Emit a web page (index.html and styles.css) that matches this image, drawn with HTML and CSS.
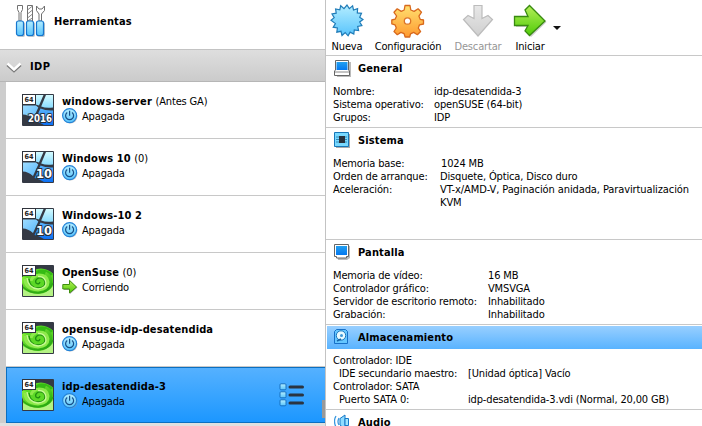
FILE: index.html
```html
<!DOCTYPE html>
<html lang="es">
<head>
<meta charset="utf-8">
<title>VirtualBox</title>
<link rel="stylesheet" href="styles.css">
</head>
<body>
<svg class="defs" width="0" height="0">
  <defs>
    <linearGradient id="blue" x1="0" y1="0" x2="0" y2="1"><stop offset="0" stop-color="#b4edff"/><stop offset="1" stop-color="#58c4fc"/></linearGradient>
    <linearGradient id="screen" x1="0" y1="0" x2="0" y2="1"><stop offset="0" stop-color="#22a0f0"/><stop offset="1" stop-color="#0478f0"/></linearGradient>
    <linearGradient id="orange" x1="0" y1="0" x2="0" y2="1"><stop offset="0" stop-color="#ffe070"/><stop offset="1" stop-color="#ff9a30"/></linearGradient>
    <linearGradient id="green" x1="0" y1="0" x2="0" y2="1"><stop offset="0" stop-color="#b4ee58"/><stop offset="1" stop-color="#50cc08"/></linearGradient>
    <linearGradient id="grey" x1="0" y1="0" x2="0" y2="1"><stop offset="0" stop-color="#e8e8e8"/><stop offset="1" stop-color="#cfcfcf"/></linearGradient>
    <linearGradient id="pane" x1="0" y1="0" x2="1" y2="1"><stop offset="0" stop-color="#9edcff"/><stop offset="1" stop-color="#58b8fc"/></linearGradient>
    <linearGradient id="pane2" x1="0" y1="0" x2="0" y2="1"><stop offset="0" stop-color="#d4fbff"/><stop offset="1" stop-color="#8adcff"/></linearGradient>
    <linearGradient id="pane3" x1="0" y1="0" x2="0" y2="1"><stop offset="0" stop-color="#58b4fc"/><stop offset="1" stop-color="#0c70f4"/></linearGradient>
    <linearGradient id="leaf" x1="0" y1="0" x2="1" y2="1"><stop offset="0" stop-color="#8cf03c"/><stop offset="1" stop-color="#1fa80c"/></linearGradient>
    <symbol id="power" viewBox="0 0 16 16">
      <circle cx="8.4" cy="8.6" r="7" fill="#9a9a9a" opacity=".6"/>
      <circle cx="7.6" cy="7.6" r="7" fill="url(#blue)" stroke="#2383d8" stroke-width="1.2"/>
      <path d="M5.2 4.400a4 4 0 1 0 4.800 0M7.600 2.800v5" fill="none" stroke="#174e88" stroke-width="1.2"/>
    </symbol>
    <symbol id="badge" viewBox="0 0 14 11">
      <rect x=".5" y=".5" width="13" height="10" fill="#fff" stroke="#30343c"/>
      <text x="7" y="8" class="bits" text-anchor="middle" textLength="9" lengthAdjust="spacingAndGlyphs">64</text>
    </symbol>
    <symbol id="win" viewBox="0 0 32 32">
      <rect width="32" height="32" rx="1" fill="#343944"/>
      <path d="M1 1h20.500L17 11.500Q14 10 10 10.500L1 10.500z" fill="url(#pane2)"/>
      <path d="M24 1h7v12.500Q24 14.500 19.200 12.500z" fill="url(#pane2)"/>
      <path d="M1 11.500h13l2.300 2L11 25Q6 20.500 1 20.500z" fill="url(#pane)"/>
      <path d="M18.500 14.500Q24 17 31 16.500V31H22Q16 27.500 12.500 27z" fill="url(#pane3)"/>
      <use href="#badge" width="14" height="11"/>
    </symbol>
    <symbol id="suse" viewBox="0 0 32 32">
      <rect width="32" height="32" rx="1" fill="#343944"/>
      <path d="M1 11h4Q10 3.500 19 3.500q7 .5 12 5V31H1z" fill="#5cd826"/>
      <path d="M11 9Q14 4.500 20 4.500q6 0 11 4.500l-5 4q-4-4-9-4z" fill="#35bb14"/>
      <path d="M1 24q7 5 16 5 9-1 14-8v10H1z" fill="#b4f284"/>
      <path d="M2 12q-1 13 14 14 12-1 12-9 0-6-5-8" fill="none" stroke="url(#leaf)" stroke-width="5"/>
      <path d="M3 14q0 10 13 11 10-1 10-8-1-7-9-7-7 1-8 6" fill="none" stroke="#8dea4b" stroke-width="3"/>
      <path d="M7 14q1 9 9 9 7 0 7-5.500-1-5.500-6.500-4.500-4 2-2.500 5 3 2 4-1" fill="none" stroke="#208e10" stroke-width="1.3"/>
      <path d="M5 13q1 10 11 11 8-1 8-6-1-7-8-6.500" fill="none" stroke="#c9fa96" stroke-width="1.4"/>
      <path d="M1 22q6 6 15 6 11-1 15-10" fill="none" stroke="#2fa717" stroke-width="1.2"/>
      <use href="#badge" width="14" height="11"/>
    </symbol>
  </defs>
</svg>
<div class="window">
  <aside class="sidebar">
    <div class="tools">
      <svg width="32" height="34" viewBox="0 0 32 34">
        <path d="M2.500 1.500h5v4l-1.500 3V17H4V8.500l-1.500-3z" fill="#fff" stroke="#707070"/>
        <path d="M12.500 1.500h5V17h-5z" fill="#fff" stroke="#707070"/>
        <path d="m12.500 6 5-4m-5 8 5-4m-5 8 5-4m-5 7 5-3" stroke="#888"/>
        <path d="M21.500 2v4.500L24 10v7h2.500v-7L29.500 6.500V2l-2.500 3h-3z" fill="#fff" stroke="#707070"/>
        <g fill="#8a9aa8" opacity=".6"><rect x="2" y="18" width="8" height="15" rx="2"/><rect x="12" y="18" width="8" height="15" rx="2"/><rect x="22" y="18" width="8" height="15" rx="2"/></g>
        <g fill="url(#blue)" stroke="#1677cf" stroke-width="1.200"><rect x="1.500" y="17" width="7" height="14.500" rx="2"/><rect x="11.500" y="17" width="7" height="14.500" rx="2"/><rect x="21.500" y="17" width="7" height="14.500" rx="2"/></g>
      </svg>
      <b>Herramientas</b>
    </div>
    <div class="group">
      <svg width="16" height="11" viewBox="0 0 16 11"><path d="m1.500 2.800 6.500 6 6.500-6" fill="none" stroke="#777" stroke-width="3"/><path d="m1.500 1.500 6.500 6 6.500-6" fill="none" stroke="#fff" stroke-width="2.400"/></svg>
      <b>IDP</b>
    </div>
    <div class="list">
      <div class="vm">
        <svg class="os" viewBox="0 0 32 32"><use href="#win"/><text class="ver" x="18" y="27.500" text-anchor="middle" textLength="24" lengthAdjust="spacingAndGlyphs">2016</text></svg>
        <div class="info"><div class="name"><b>windows-server</b> <span>(Antes GA)</span></div><div class="state"><svg width="16" height="16"><use href="#power"/></svg><span>Apagada</span></div></div>
      </div>
      <div class="vm">
        <svg class="os" viewBox="0 0 32 32"><use href="#win"/><text class="ver ten" x="22" y="27" text-anchor="middle" textLength="16" lengthAdjust="spacingAndGlyphs">10</text></svg>
        <div class="info"><div class="name"><b>Windows 10</b> <span>(0)</span></div><div class="state"><svg width="16" height="16"><use href="#power"/></svg><span>Apagada</span></div></div>
      </div>
      <div class="vm">
        <svg class="os" viewBox="0 0 32 32"><use href="#win"/><text class="ver ten" x="22" y="27" text-anchor="middle" textLength="16" lengthAdjust="spacingAndGlyphs">10</text></svg>
        <div class="info"><div class="name"><b>Windows-10 2</b></div><div class="state"><svg width="16" height="16"><use href="#power"/></svg><span>Apagada</span></div></div>
      </div>
      <div class="vm">
        <svg class="os" viewBox="0 0 32 32"><use href="#suse"/></svg>
        <div class="info"><div class="name"><b>OpenSuse</b> <span>(0)</span></div><div class="state"><svg width="16" height="16" viewBox="0 0 16 16"><path d="M2 6.500h6V2.500l7.500 6-7.500 6.500v-4H2z" fill="#aaa"/><path d="M.8 5.500h6.700V1.300L14.500 8l-7 6v-4H.8z" fill="url(#green)" stroke="#3f8f10"/></svg><span>Corriendo</span></div></div>
      </div>
      <div class="vm">
        <svg class="os" viewBox="0 0 32 32"><use href="#suse"/></svg>
        <div class="info"><div class="name"><b>opensuse-idp-desatendida</b></div><div class="state"><svg width="16" height="16"><use href="#power"/></svg><span>Apagada</span></div></div>
      </div>
      <div class="vm selected">
        <svg class="os" viewBox="0 0 32 32"><use href="#suse"/></svg>
        <div class="info"><div class="name"><b>idp-desatendida-3</b></div><div class="state"><svg width="16" height="16"><use href="#power"/></svg><span>Apagada</span></div></div>
        <svg class="menu" width="26" height="24" viewBox="0 0 26 24"><g fill="url(#blue)" stroke="#1670c0"><rect x="1" y=".8" width="6" height="6" rx="1"/><rect x="1" y="8.800" width="6" height="6" rx="1"/><rect x="1" y="16.800" width="6" height="6" rx="1"/></g><path d="M11 4h12.500M11 12h12.500M11 20h12.500" stroke="#2b3440" stroke-width="3" stroke-linecap="round"/></svg>
      </div>
      <i class="thumb"></i>
    </div>
  </aside>
  <main class="details">
    <nav class="toolbar">
      <div class="action new">
        <svg width="34" height="34" viewBox="0 0 34 34"><path d="M17 1l2.300 3.600 3.300-2.700.9 4.100 4.100-1.300-.3 4.200 4.200.4-1.800 3.900 3.300 2.300-3.300 2.500 2.200 3.600-4.200.8.900 4.200-4.300-.7-.5 4.200-3.700-2-2 3.700-2.900-3.200-3.200 2.900-1-4.200-4.200.9.600-4.200-4.200-.8 2.200-3.600L1 16.300l3.200-2.600L2 10l4.200-.8-.6-4.300 4.200.9.900-4.100 3.300 2.900z" fill="url(#blue)" stroke="#207cb8" stroke-width="1.200"/></svg>
        <span>Nueva</span></div>
      <div class="action conf">
        <svg width="34" height="34" viewBox="0 0 34 34"><path d="M14 1.500h5l.8 4.500 3.300 1.400 4-2.600 3.400 3.400-2.600 3.900 1.300 3.200 3.300.7v4l-4 .8-1.200 3.300 2.300 3.400-3.200 3.200-3.700-2.300-3.200 1.400-.8 3.200h-4.600l-1-3.300-3.200-1.300-3.600 2.300-3.300-3.200 2.300-3.500-1.300-3.200-3.200-1V16l3.300-.8 1.500-3.200-2.600-3.700 3.200-3.500 4 2.600L13.200 6z" fill="url(#orange)" stroke="#d8681c" stroke-width="1.300" stroke-linejoin="round"/><circle cx="16.500" cy="17" r="3.200" fill="#fff" stroke="#db7428" stroke-width="1.300"/></svg>
        <span>Configuración</span></div>
      <div class="action discard">
        <svg width="34" height="34" viewBox="0 0 34 34"><path d="M13 1.500h8v13l6-3 4.500 4L17 32 2.500 15.500l4.500-4 6 3z" fill="url(#grey)" stroke="#bcbcbc" stroke-width="1.200"/></svg>
        <span>Descartar</span></div>
      <div class="action start">
        <svg width="34" height="34" viewBox="0 0 34 34"><path d="M3 14h15l-4-7 4-4 15.500 15L18 33l-4-4 4-6H3z" fill="#aaa" opacity=".6"/><path d="M1.500 12.500H15L12 6l4.500-4.500L32 17 16.500 31.500 12 27l3-5.500H1.500z" fill="url(#green)" stroke="#388a10" stroke-width="1.300"/></svg>
        <span>Iniciar</span></div>
      <i class="arrow"></i>
    </nav>
    <section class="general">
      <h2><svg width="17" height="17" viewBox="0 0 17 17"><path d="M2 2h15v15H3z" fill="#bbb"/><path d="M1.500.500h13v9.500l1 1v4.500H.500V11l1-1z" fill="#fff" stroke="#666"/><path d="M2.500 2h11v8h-11z" fill="url(#screen)"/><path d="M1 12h14" stroke="#888"/></svg>General</h2>
      <dl><dt>Nombre:</dt><dd>idp-desatendida-3</dd><dt>Sistema operativo:</dt><dd>openSUSE (64-bit)</dd><dt>Grupos:</dt><dd>IDP</dd></dl>
    </section>
    <section class="system">
      <h2><svg width="17" height="17" viewBox="0 0 17 17"><path d="M2 2h14v14H2z" fill="#aaa"/><path d="M.500.500h14v14H.500z" fill="#78d9ff" stroke="#1777b8"/><path d="M2 5h11M2 7.500h11M2 10h11" stroke="#3288b8"/><path d="M5 4h6v7H5z" fill="#28323c"/></svg>Sistema</h2>
      <dl><dt>Memoria base:</dt><dd class="mb">1024 MB</dd><dt>Orden de arranque:</dt><dd>Disquete, Óptica, Disco duro</dd><dt>Aceleración:</dt><dd class="accel">VT-x/AMD-V, Paginación anidada, Paravirtualización<br>KVM</dd></dl>
    </section>
    <section class="display">
      <h2><svg width="17" height="17" viewBox="0 0 17 17"><path d="M2 2h14v12l-3 2H4z" fill="#bbb"/><path d="M.500.500h14v12h-2v1.500h-10v-1.500h-2z" fill="#fff" stroke="#666"/><path d="M2 2h11v9H2z" fill="url(#screen)"/></svg>Pantalla</h2>
      <dl><dt>Memoria de vídeo:</dt><dd>16 MB</dd><dt>Controlador gráfico:</dt><dd>VMSVGA</dd><dt>Servidor de escritorio remoto:</dt><dd>Inhabilitado</dd><dt>Grabación:</dt><dd>Inhabilitado</dd></dl>
    </section>
    <section class="storage">
      <h2><svg width="17" height="17" viewBox="0 0 17 17"><path d="M2.500.500h9l2 2v12H.500v-12z" fill="#65c6ff" stroke="#1770c8"/><circle cx="7" cy="6.500" r="4.700" fill="#e8faff" stroke="#1a75be"/><circle cx="7.500" cy="6.500" r="1.500" fill="#4098d8"/><path d="M3 12l4-2" stroke="#1665a8" stroke-width="1.500"/></svg>Almacenamiento</h2>
      <dl><dt>Controlador: IDE</dt><dd></dd><dt class="sub">IDE secundario maestro:</dt><dd>[Unidad óptica] Vacío</dd><dt>Controlador: SATA</dt><dd></dd><dt class="sub">Puerto SATA 0:</dt><dd>idp-desatendida-3.vdi (Normal, 20,00 GB)</dd></dl>
    </section>
    <section class="audio">
      <h2><svg width="17" height="17" viewBox="0 0 17 17"><path d="M2 2q-3 5 0 11M5 4q-2 4 0 7" fill="none" stroke="#3797df" stroke-width="1.300"/><path d="M6 4.500 11 1v14l-5-4z" fill="#8fdcff" stroke="#1779c8"/><path d="M11 4.500h3.500v7H11z" fill="#9ee5ff" stroke="#1779c8"/></svg>Audio</h2>
    </section>
  </main>
</div>
</body>
</html>
```

FILE: styles.css
```css
* { box-sizing: border-box; }
html { overflow: hidden; }
body {
  margin: 0;
  width: 702px;
  height: 426px;
  overflow: hidden;
  background: #fff;
  color: #000;
  font: 11px/13px "DejaVu Sans Condensed", "DejaVu Sans", sans-serif;
  font-stretch: condensed;
  letter-spacing: -0.15px;
  white-space: nowrap;
}
b, h2 { font-weight: bold; letter-spacing: 0.13px; }
svg { flex: none; display: block; }
.defs { position: absolute; }
.window { display: flex; height: 426px; overflow: hidden; }
.sidebar { width: 325px; flex: none; background: #e0e0e0; }
.tools { height: 49px; background: #fff; display: flex; padding: 4px 0 0 15px; }
.tools b { margin: 11px 0 0 7px; }
.group {
  height: 33px;
  display: flex;
  align-items: center;
  gap: 8px;
  padding-left: 6px;
  border-top: 1px solid #c3c3c3;
  border-bottom: 1px solid #b6b6b6;
  background: linear-gradient(#dedede, #cbcbcb);
}
.group svg { margin-top: 3px; }
.group b { margin-top: 2px; letter-spacing: 0.4px; }
.list { position: relative; border-left: 6px solid #cdcdcd; }
.vm {
  height: 57px;
  display: flex;
  padding: 12px 0 0 16px;
  background: #fff;
  border-bottom: 1px solid #c8c8c8;
}
.os { width: 32px; height: 32px; }
.info { margin-left: 8px; }
.name { height: 14px; padding-top: 1px; }
.name span { margin-left: 0.5px; }
.state { display: flex; gap: 4px; line-height: 16px; }
.state span { padding-top: 1px; }
.selected {
  height: 56px;
  padding: 11px 0 0 15px;
  border: 1px solid #0b6fc0;
  border-right: 0;
  background: linear-gradient(#55b1ff, #1c97ff);
}
.menu { margin: 4px 20px 0 auto; }
.thumb { position: absolute; right: 0; bottom: 5px; width: 3px; height: 18px; background: #999; }
.bits { font: bold 7px "DejaVu Sans", sans-serif; letter-spacing: 0; fill: #222; }
.ver {
  font: bold 10px "DejaVu Sans", sans-serif;
  letter-spacing: 0;
  fill: #fff;
  stroke: #26303c;
  stroke-width: 2px;
  paint-order: stroke;
}
.ten { font-size: 12px; }
.details { width: 377px; height: 426px; flex: none; border-left: 1px solid #c3c3c3; }
.toolbar { height: 55px; display: flex; padding: 4px 0 0 4px; }
.action { display: flex; flex-direction: column; align-items: center; gap: 2px; }
.action span { line-height: 13px; }
.new { width: 34px; }
.conf { width: 68px; margin-left: 10px; }
.discard { width: 50px; margin-left: 11px; color: #969696; }
.start { width: 34px; margin-left: 10px; }
.arrow {
  width: 0;
  height: 0;
  margin: 22px 0 0 6px;
  border: 4px solid transparent;
  border-top-color: #111;
  border-bottom: 0;
}
section { height: 85px; border-top: 1px solid #c8c8c8; padding: 1px 0 0 1px; }
.general { height: 72px; }
.system { height: 112px; }
.audio { height: 17px; }
h2 {
  display: flex;
  align-items: center;
  gap: 7px;
  height: 23px;
  margin: 0;
  padding-left: 7px;
  font-size: 11px;
}
.storage h2 { background: linear-gradient(#98cfff, #59b3ff); }
dl {
  display: grid;
  grid-template-columns: 101px 1fr;
  grid-auto-rows: 13px;
  margin: 5px 0 0 6px;
}
dt, dd { margin: 0; }
.system dl { grid-template-columns: 107px 1fr; }
.display dl { grid-template-columns: 155px 1fr; }
.storage dl { grid-template-columns: 135px 1fr; }
.sub { padding-left: 6px; }
.mb { padding-left: 1px; }
.accel { letter-spacing: -0.1px; }
```
